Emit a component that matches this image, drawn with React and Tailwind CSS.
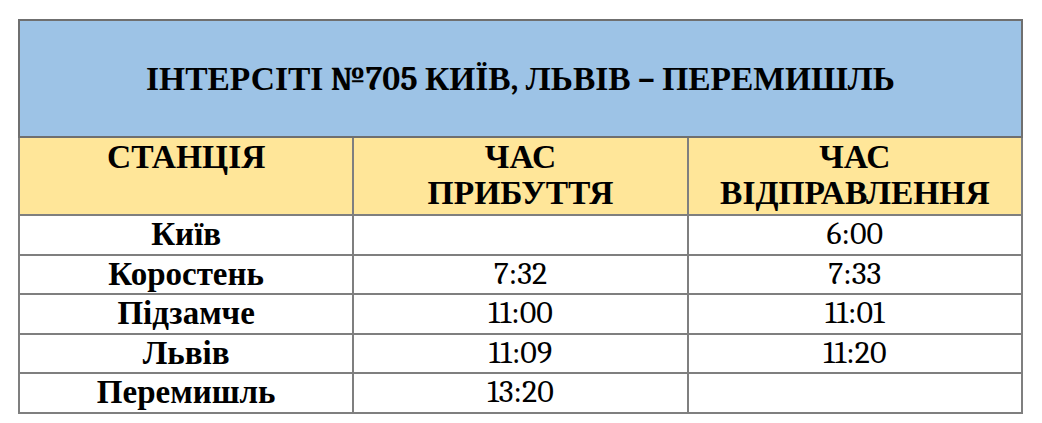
const rows = [
  ["Київ", "", "6:00"],
  ["Коростень", "7:32", "7:33"],
  ["Підзамче", "11:00", "11:01"],
  ["Львів", "11:09", "11:20"],
  ["Перемишль", "13:20", ""],
];

export default function App() {
  return (
    <div className="w-[1042px] h-[423px] bg-white pt-[19px] pl-[18px] font-serif">
      <table className="border-collapse w-[1005px] text-black table-fixed font-serif">
        <tbody>
          <tr className="h-[117px]">
            <td colSpan={3} className="bg-[#9dc3e6] border-2 border-[#6f6f6f] text-center font-bold font-serif text-[33.5px] leading-none align-middle pt-[2px]">
              ІНТЕРСІТІ №705 КИЇВ, ЛЬВІВ – ПЕРЕМИШЛЬ
            </td>
          </tr>
          <tr className="h-[78px]">
            <td className="bg-[#ffe699] border-2 border-[#7f7f7f] text-center font-bold font-serif text-[33.5px] leading-[36px] align-top pt-[1px]">СТАНЦІЯ</td>
            <td className="bg-[#ffe699] border-2 border-[#7f7f7f] text-center font-bold font-serif text-[33.5px] leading-[36px] align-top pt-[1px]">ЧАС<br />ПРИБУТТЯ</td>
            <td className="bg-[#ffe699] border-2 border-[#7f7f7f] text-center font-bold font-serif text-[33.5px] leading-[36px] align-top pt-[1px]">ЧАС<br />ВІДПРАВЛЕННЯ</td>
          </tr>
          {rows.map((r, i) => (
            <tr key={i} className="h-[39.5px]">
              <td className="border-2 border-[#7f7f7f] text-center font-bold font-serif text-[33px] leading-[36px] align-top p-0">{r[0]}</td>
              <td className="border-2 border-[#7f7f7f] text-center font-serif text-[32px] leading-[36px] align-top p-0">{r[1]}</td>
              <td className="border-2 border-[#7f7f7f] text-center font-serif text-[32px] leading-[36px] align-top p-0">{r[2]}</td>
            </tr>
          ))}
        </tbody>
      </table>
    </div>
  );
}
